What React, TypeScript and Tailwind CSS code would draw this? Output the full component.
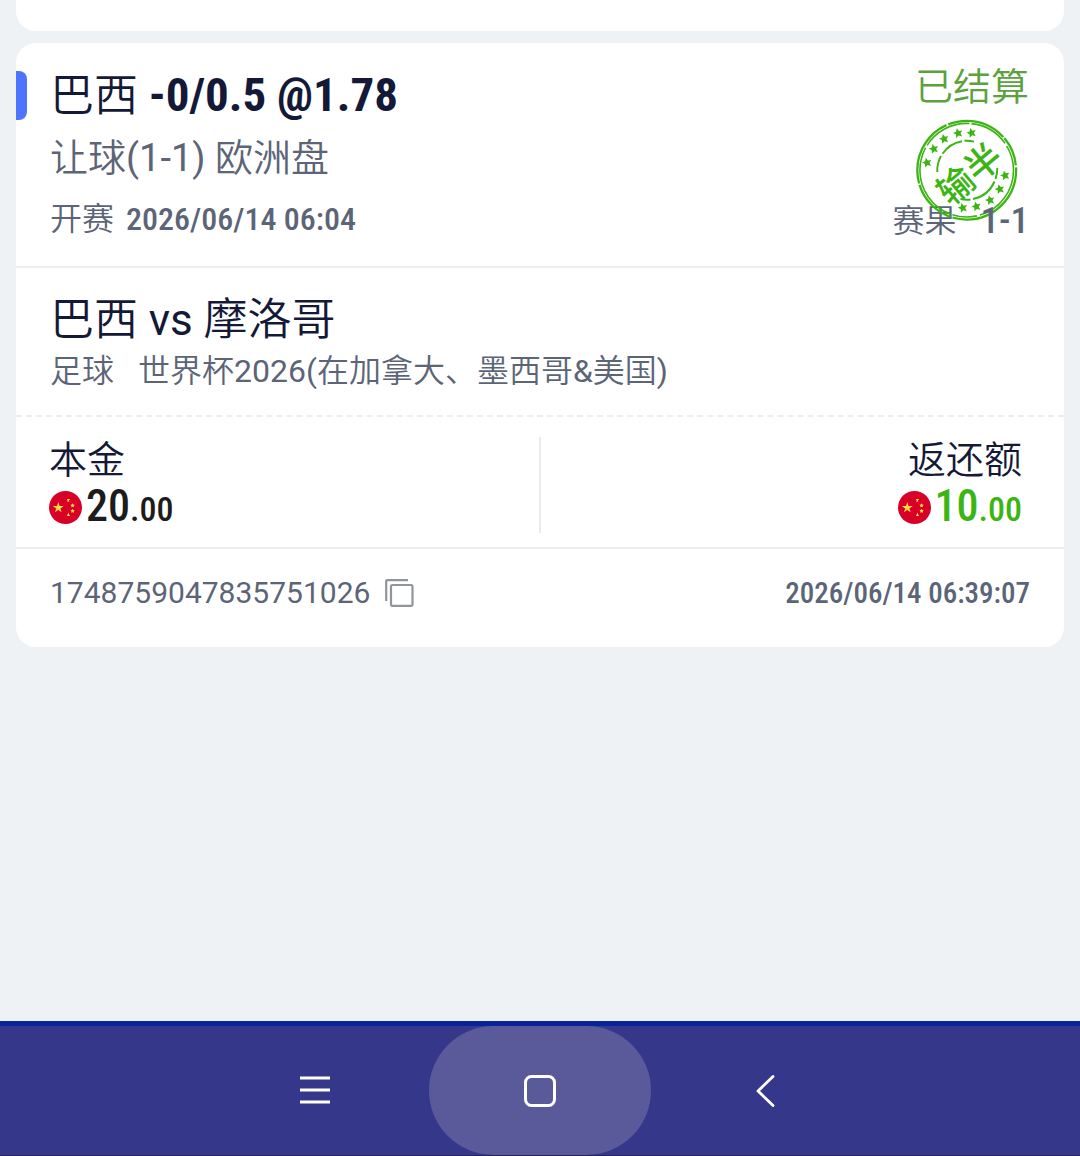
import type { ReactNode } from "react";

const STAMP_STARS = [
  [22, 52.5],
  [28.7, 38.7],
  [39, 28.7],
  [53, 23],
  [66.5, 22.7],
  [100, 65.3],
  [94.7, 79],
  [85, 90],
  [71.3, 96.3],
  [57.7, 97.7],
];

const STAR =
  "M0 -4.8 L1.5 -1.6 L4.8 -1.4 L2.3 1 L3.1 4.4 L0 2.7 L-3.1 4.4 L-2.3 1 L-4.8 -1.4 L-1.5 -1.6 Z";

function ResultStamp() {
  return (
    <svg viewBox="0 0 120 120" className="h-[120px] w-[120px]" aria-hidden="true">
      <g fill="none" stroke="#3cb514">
        <circle cx="61.7" cy="60.2" r="49.4" strokeWidth="2.3" strokeDasharray="92 2 46 1.5 70 2 60 1.5 30 2" />
        <circle cx="61.7" cy="60.2" r="46.8" strokeWidth="1.6" strokeDasharray="60 3 25 2 80 3 50 2 40 3" />
        <path d="M32.3 62 A29.4 29.4 0 0 1 36 46 M37.5 43.8 A29.4 29.4 0 0 1 57 31.2 M59.5 30.8 A29.4 29.4 0 0 1 69 31.6" strokeWidth="1.9" />
        <path d="M92.3 58 A30 30 0 0 1 90.5 69 M89.5 71.5 A30 30 0 0 1 68 89 M65.5 89.5 A30 30 0 0 1 55.5 89" strokeWidth="1.9" />
      </g>
      {STAMP_STARS.map(([x, y]) => (
        <path key={`${x}-${y}`} d={STAR} fill="#3cb514" transform={`translate(${x} ${y}) rotate(-15)`} />
      ))}
      <text
        x="0"
        y="0"
        transform="translate(62.5 61.5) rotate(-40)"
        textAnchor="middle"
        dominantBaseline="central"
        fill="#3cb514"
        className="font-['Noto_Sans_CJK_SC',sans-serif] text-[36px] font-medium"
      >
        输半
      </text>
    </svg>
  );
}

function FlagIcon() {
  return (
    <svg viewBox="0 0 33 33" className="h-[33px] w-[33px] shrink-0" aria-hidden="true">
      <circle cx="16.5" cy="16.5" r="16.5" fill="#d80027" />
      <g fill="#ffda44">
        <path d="M9.3 11 L10.6 15 L14.7 15 L11.4 17.4 L12.6 21.3 L9.3 18.9 L6 21.3 L7.2 17.4 L3.9 15 L8 15 Z" />
        <path d="M18 8 h3.2 l-1.2 1.5 .3 1.8 -1.2 -1 -.9 .8 .3 -1.6 Z" />
        <path d="M18 25 h3.2 l-1.1 -1.5 -.4 -1.9 -1 1.7 Z" />
        <path d="M23.6 12.3 l.7 1.3 1.4 .2 -1 1.1 .2 1.4 -1.4 -.6 -1.3 .6 .3 -1.4 -1 -1.1 1.4 -.2 Z" />
        <path d="M23.6 17.8 l.7 1.3 1.4 .2 -1 1.1 .2 1.4 -1.4 -.6 -1.3 .6 .3 -1.4 -1 -1.1 1.4 -.2 Z" />
      </g>
    </svg>
  );
}

interface AmountProps {
  whole: string;
  cents: string;
  className: string;
}

function Amount({ whole, cents, className }: AmountProps) {
  return (
    <div className={`flex items-center gap-1 font-['Roboto_Condensed','Roboto',sans-serif] font-medium ${className}`}>
      <FlagIcon />
      <span className="text-[44px] leading-[48px]">
        {whole}
        <span className="text-[34px]">{cents}</span>
      </span>
    </div>
  );
}

function NavButton({ label, active, children }: { label: string; active?: boolean; children: ReactNode }) {
  return (
    <button
      type="button"
      aria-label={label}
      className={`flex h-full w-[222px] items-center justify-center rounded-full ${active ? "bg-[#5a5a9a]" : ""}`}
    >
      {children}
    </button>
  );
}

export default function App() {
  return (
    <div className="flex min-h-screen flex-col bg-[#eef2f5] font-['Roboto','Noto_Sans_CJK_SC',sans-serif] text-[#5c6577]">
      <main className="flex flex-1 flex-col gap-3 px-4">
        <div className="h-[31px] rounded-b-[20px] bg-white" />

        <article className="rounded-[20px] bg-white">
          {/* Bet selection */}
          <section className="relative flex justify-between border-b-2 border-[#eceff2] pt-6 pr-[35px] pb-5 pl-[34px]">
            <span className="absolute top-7 left-0 h-[49px] w-[11px] rounded-r-[8px] bg-[#4d74ff]" />
            <div>
              <h2 className="text-[44px] leading-[56px] font-[350] text-[#141938]">
                巴西{" "}
                <span className="font-['Roboto_Condensed','Roboto',sans-serif] text-[47px] font-bold">
                  -0/0.5 @1.78
                </span>
              </h2>
              <p className="text-[38px] leading-[68px] font-[350]">
                让球<span className="font-normal">(1-1) </span>欧洲盘
              </p>
              <p className="flex items-center gap-3 text-[32px] leading-[54px] font-[350]">
                开赛
                <span className="font-['Roboto_Condensed','Roboto',sans-serif] font-medium">
                  2026/06/14 06:04
                </span>
              </p>
            </div>
            <div className="flex flex-col items-end justify-between">
              <p className="text-[38px] leading-[40px] font-[350] text-[#5ba23d]">已结算</p>
              <p className="flex items-center gap-6 text-[32px] leading-[50px] font-[350]">
                赛果
                <span className="relative z-10 font-['Roboto_Condensed','Roboto',sans-serif] text-[37px] font-medium">
                  1-1
                </span>
              </p>
            </div>
            <div className="absolute top-[67px] right-[39px]">
              <ResultStamp />
            </div>
          </section>

          {/* Match */}
          <section className="border-b-2 border-dashed border-[#eceef3] px-[34px] pt-6 pb-[21px]">
            <h3 className="text-[44px] leading-[56px] font-[350] text-[#141938]">
              巴西 <span className="font-normal">vs</span> 摩洛哥
            </h3>
            <p className="flex gap-6 text-[32px] leading-[46px] font-[350]">
              <span>足球</span>
              <span>
                世界杯<span className="font-normal">2026(</span>在加拿大、墨西哥
                <span className="font-normal">&amp;</span>美国<span className="font-normal">)</span>
              </span>
            </p>
          </section>

          {/* Stake and return */}
          <section className="grid grid-cols-[1fr_2px_1fr] items-center border-b-2 border-[#eceef5] pt-5 pb-[14px]">
            <div className="pl-[33px]">
              <p className="text-[38px] leading-[44px] font-[350] text-[#141938]">本金</p>
              <Amount whole="20" cents=".00" className="text-[#1c1c1c]" />
            </div>
            <div className="h-24 bg-[#e8ebf0]" />
            <div className="flex flex-col items-end pr-[42px]">
              <p className="text-[38px] leading-[44px] font-[350] text-[#141938]">返还额</p>
              <Amount whole="10" cents=".00" className="text-[#3cb514]" />
            </div>
          </section>

          {/* Order number */}
          <footer className="flex items-center justify-between px-[34px] pt-5 pb-[30px]">
            <div className="flex items-center gap-[14px] text-[30px] leading-[48px]">
              1748759047835751026
              <button type="button" aria-label="复制">
                <svg viewBox="0 0 30 30" className="h-[30px] w-[30px]" fill="none" stroke="#929699" strokeWidth="2.2">
                  <path d="M2.2 23 V3.3 Q2.2 2.1 3.4 2.1 H24" />
                  <rect x="7" y="7" width="21.5" height="20.8" rx="1.5" />
                </svg>
              </button>
            </div>
            <time className="font-['Roboto_Condensed','Roboto',sans-serif] text-[29px] leading-[48px] font-medium">
              2026/06/14 06:39:07
            </time>
          </footer>
        </article>
      </main>

      <nav className="flex h-[135px] items-stretch justify-center gap-[3px] border-t-[5px] border-b border-t-[#07249a] border-b-[#25255c] bg-[#35378b]">
        <NavButton label="最近任务">
          <svg viewBox="0 0 32 32" className="h-8 w-8" stroke="#fff" strokeWidth="3">
            <path d="M1 3 H31 M1 15 H31 M1 27 H31" />
          </svg>
        </NavButton>
        <NavButton label="主屏幕" active>
          <svg viewBox="0 0 34 34" className="h-[34px] w-[34px]" fill="none" stroke="#fff" strokeWidth="3">
            <rect x="2.5" y="2.5" width="29" height="29" rx="6" />
          </svg>
        </NavButton>
        <NavButton label="返回">
          <svg
            viewBox="0 0 20 34"
            className="h-[34px] w-5"
            fill="none"
            stroke="#fff"
            strokeWidth="2.8"
            strokeLinecap="round"
            strokeLinejoin="round"
          >
            <path d="M18 2.5 L3 17 L18 31.5" />
          </svg>
        </NavButton>
      </nav>
    </div>
  );
}
